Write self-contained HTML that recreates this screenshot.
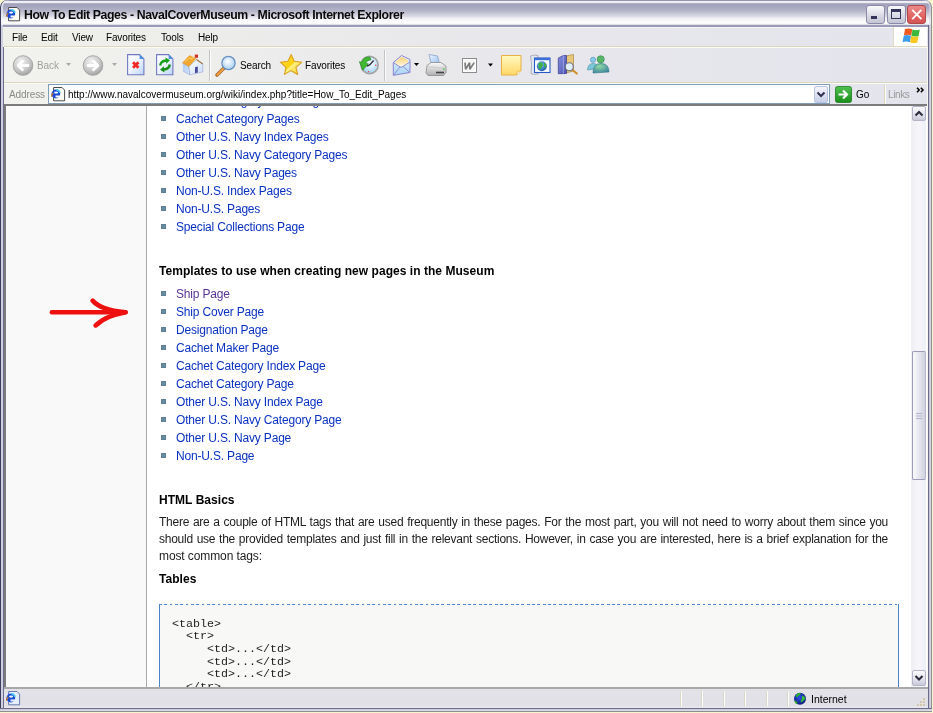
<!DOCTYPE html>
<html><head><meta charset="utf-8">
<style>
*{box-sizing:border-box}
html,body{margin:0;padding:0}
body{width:933px;height:713px;overflow:hidden;position:relative;background:#f8f5cf;font-family:"Liberation Sans",sans-serif}
.a{position:absolute}
#win{left:0;top:0;width:932px;height:712px;background:#f8f6ee;border-radius:7px 7px 0 0;overflow:hidden}
#title{left:0;top:0;width:932px;height:25px;border-radius:7px 7px 0 0;box-shadow:inset 1px 0 0 #3c3c5c,inset -1px 0 0 #8c9090,inset 3px 0 0 rgba(240,240,248,.7),inset -3px 0 0 rgba(220,220,232,.6);background:linear-gradient(to bottom,#9494b0 0px,#9494b0 1px,#f0f0f4 1px,#eeeef2 3px,#b8b8cc 3px,#a4a4be 4px,#a4a4be 6px,#acacc4 8.5px,#b4b4c8 10.5px,#c0c0d0 12.5px,#cecedc 14.5px,#dcdce6 16.5px,#e8e8ee 17.5px,#f0f0f4 18.5px,#f8f8fa 20.5px,#fcfcfc 22.5px,#f8f8fa 23.5px,#e0e0e8 24.5px)}
.tt{font-weight:bold;font-size:12.3px;line-height:1;letter-spacing:-0.4px;color:#0a0a0a;white-space:nowrap}
#frameL{left:0;top:25px;width:4px;height:687px;background:linear-gradient(to right,#3c3c5c 0,#3c3c5c 1px,#d0d0e0 1px,#d0d0e0 3px,#6c6c90 3px)}
#frameR{left:928px;top:25px;width:4px;height:687px;background:linear-gradient(to right,#6c6c88 0,#6c6c88 1px,#b4b4c8 1px,#d4d4e0 2px,#d4d4e0 3px,#8c9090 3px)}
#frameB{left:0;top:708px;width:932px;height:4px;background:linear-gradient(to bottom,#6c6c88 0,#6c6c88 1px,#c4c4d4 1px,#d8d8e4 2px,#d8d8e4 3px,#8c9090 3px)}
#menubar{left:3px;top:25px;width:925px;height:22px;background:linear-gradient(to bottom,#9a9ab6 0,#9a9ab6 2px,#f4f4f6 2px,#f4f4f6 3px,transparent 3px),linear-gradient(to right,#f0f0ea,#ebebeb 30%,#e6e6ec 65%,#e4e4ec)}
.mi{font-size:10px;color:#000;top:32px;white-space:nowrap;letter-spacing:-0.15px}
#sep1{left:4px;top:46px;width:923px;height:2px;background:linear-gradient(to bottom,#dcd6bc 0,#dcd6bc 1px,#fafaf6 1px)}
#toolbar{left:4px;top:48px;width:923px;height:35px;background:linear-gradient(to right,#f2f2ee,#ececec 30%,#e6e6ec 65%,#e4e4ec)}
#sep2{left:4px;top:82px;width:923px;height:2px;background:linear-gradient(to bottom,#dcd6bc 0,#dcd6bc 1px,#fafaf6 1px)}
#addr{left:4px;top:84px;width:923px;height:20px;background:linear-gradient(to right,#f2f2ee,#ececec 30%,#e6e6ec 65%,#e4e4ec)}
.tb{font-size:10px;white-space:nowrap;letter-spacing:-0.1px}
#content{left:4px;top:104px;width:923px;height:583px;background:#7c7c7c}
#page{left:6px;top:106px;width:921px;height:581px;background:#fff;overflow:hidden}
#leftcol{left:0;top:0;width:141px;height:581px;background:#f9f9f9;border-right:1px solid #aaa}
#status{left:4px;top:687px;width:924px;height:21px;background:linear-gradient(to bottom,#a8a8a8 0,#a8a8a8 2px,#e2e2e8 2px,#e0e0e6 19px,#e8e8ee 20px)}
.li{font-size:12px;letter-spacing:-0.18px;color:#0a32c0;white-space:nowrap}
.bul{width:5px;height:5px;background:#6a8ca2;border:1px solid #5d8096}
.h{font-size:12px;font-weight:bold;color:#000;white-space:nowrap;letter-spacing:0.04px}
.p{font-size:12px;color:#1c1c1c;white-space:nowrap;letter-spacing:-0.1px}
#pre{left:153px;top:498px;width:740px;height:100px;background:#f8f9f7;border:1px solid #4a84c6;border-top:none;border-bottom:none}
#pretop{left:153px;top:498px;width:740px;height:1px;background:repeating-linear-gradient(to right,#4e86c6 0,#4e86c6 2.8px,transparent 2.8px,transparent 5.33px)}
.pl{font-family:"Liberation Mono",monospace;font-size:11.67px;color:#1e1e1e;white-space:pre}
#sb{left:905px;top:0;width:15px;height:581px;background:linear-gradient(to right,#eeeef4,#f6f6fa 50%,#eeeef6)}
.li,.p,.h,.pl,.tb,.mi,.tt{will-change:transform}
</style></head><body>
<div id="win" class="a">
 <div id="title" class="a"></div>
 <div id="frameL" class="a"></div>
 <div id="frameR" class="a"></div>
 <div id="frameB" class="a"></div>
 <!-- title icon -->
 <svg class="a" style="left:5px;top:6px" width="16" height="16" viewBox="0 0 16 16">
  <path d="M3.6 1.5h8.4l2.6 2.6v10.7h-11z" fill="#fbfbf4" stroke="#4a4a4a" stroke-width="1"/>
  <circle cx="5.8" cy="8" r="4.4" fill="#1a4ad8"/>
  <path d="M6.3 3.7a4.3 4.3 0 0 1 3.8 3.2" fill="none" stroke="#48c8f8" stroke-width="1.6"/>
  <ellipse cx="6.1" cy="6.6" rx="2.1" ry="1.05" fill="#e8f4ff"/>
  <path d="M5.5 9.4h5v2.1h-5z" fill="#fbfbf4"/>
  <path d="M1.5 10.8q0.2-2.2 1.6-4" fill="none" stroke="#c87830" stroke-width="1.3"/>
 </svg>
 <div class="a tt" style="left:24px;top:8.6px">How To Edit Pages - NavalCoverMuseum - Microsoft Internet Explorer</div>
 <!-- title buttons -->
 <div class="a" style="left:866px;top:5px;width:19px;height:19px;border:1px solid #8a8aa8;border-radius:3px;background:linear-gradient(to bottom,#fafafc,#d8d8e4 60%,#c4c4d4)"></div>
 <div class="a" style="left:871px;top:16px;width:6px;height:3px;background:#34345a"></div>
 <div class="a" style="left:887px;top:5px;width:19px;height:19px;border:1px solid #8a8aa8;border-radius:3px;background:linear-gradient(to bottom,#fafafc,#d8d8e4 60%,#c4c4d4)"></div>
 <div class="a" style="left:891px;top:9px;width:10px;height:10px;border:1px solid #34345a;border-top-width:3px"></div>
 <div class="a" style="left:907px;top:5px;width:19px;height:19px;border:1px solid #b04848;border-radius:3px;background:linear-gradient(to bottom,#ec8a8a,#e06464 60%,#d45454)"></div>
 <svg class="a" style="left:907px;top:5px" width="19" height="19" viewBox="0 0 19 19"><path d="M5.2 4.8L14.4 14.2M14.4 4.8L5.2 14.2" stroke="#fff" stroke-width="1.8"/></svg>

 <!-- menubar -->
 <div id="menubar" class="a"></div>
 <div class="a" style="left:893px;top:27px;width:34px;height:19px;background:#fff"></div>
 <div class="a" style="left:893px;top:27px;width:1px;height:19px;background:#e0dcc4"></div>
 <svg class="a" style="left:896px;top:25px" width="30" height="22" viewBox="896 25 30 22">
  <path d="M905 29q3.5-1.3 7.3 0.2l-1.1 6.3q-3.8-1.4-7.3-0.1z" fill="#f05a20"/>
  <path d="M912.5 29.4q3.8 1.4 7.3 0.2l-1.2 6.3q-3.6 1.2-7.2-0.2z" fill="#3cb83c"/>
  <path d="M903.7 35.7q3.5-1.3 7.3 0.2l-1.1 6.3q-3.8-1.4-7.3-0.1z" fill="#3c9cf0"/>
  <path d="M911.2 36.1q3.8 1.4 7.3 0.2l-1.2 6.3q-3.6 1.2-7.2-0.2z" fill="#f8c820"/>
 </svg>
 <div class="a mi" style="left:12px">File</div>
 <div class="a mi" style="left:41px">Edit</div>
 <div class="a mi" style="left:72px">View</div>
 <div class="a mi" style="left:106px">Favorites</div>
 <div class="a mi" style="left:161px">Tools</div>
 <div class="a mi" style="left:198px">Help</div>
 <div id="sep1" class="a"></div>

 <!-- toolbar -->
 <div id="toolbar" class="a"></div>
 <div id="sep2" class="a"></div>
 <div id="addr" class="a"></div>

 <!-- toolbar icons -->
 <svg class="a" style="left:12px;top:55px" width="22" height="22" viewBox="0 0 22 22">
  <defs><radialGradient id="gb" cx="40%" cy="30%" r="75%"><stop offset="0" stop-color="#f2f2f2"/><stop offset="0.6" stop-color="#c8c8c8"/><stop offset="1" stop-color="#9c9c9c"/></radialGradient></defs>
  <circle cx="11" cy="10.5" r="9.8" fill="url(#gb)" stroke="#a2a2a2" stroke-width="0.9"/>
  <path d="M16 10.5H6.5M10.5 6.2L6.2 10.5 10.5 14.8" fill="none" stroke="#fff" stroke-width="2.8" stroke-linecap="round" stroke-linejoin="round"/>
 </svg>
 <div class="a tb" style="left:36.5px;top:61.1px;color:#a0a0a0;line-height:1">Back</div>
 <svg class="a" style="left:66px;top:63px" width="6" height="4"><path d="M0 0h5L2.5 3z" fill="#a8a8a8"/></svg>
 <svg class="a" style="left:82px;top:55px" width="22" height="22" viewBox="0 0 22 22">
  <circle cx="11" cy="10.5" r="9.8" fill="url(#gb)" stroke="#a2a2a2" stroke-width="0.9"/>
  <path d="M6 10.5H15.5M11.5 6.2L15.8 10.5 11.5 14.8" fill="none" stroke="#fff" stroke-width="2.8" stroke-linecap="round" stroke-linejoin="round"/>
 </svg>
 <svg class="a" style="left:112px;top:63px" width="6" height="4"><path d="M0 0h5L2.5 3z" fill="#a8a8a8"/></svg>
 <!-- stop -->
 <svg class="a" style="left:124px;top:50px" width="54" height="30" viewBox="124 50 54 30">
  <defs><linearGradient id="gdoc" x1="0" y1="0" x2="1" y2="1"><stop offset="0" stop-color="#ffffff"/><stop offset="0.5" stop-color="#eef4fe"/><stop offset="1" stop-color="#b8d4f8"/></linearGradient></defs>
  <path d="M127.6 54.6h12l4.3 4.3v15.9h-16.3z" fill="url(#gdoc)" stroke="#7078c0" stroke-width="1.1"/>
  <path d="M139.6 54.6v4.3h4.3z" fill="#4890e0"/>
  <path d="M133 62.2l5.5 5.6M138.5 62.2l-5.5 5.6" stroke="#f02828" stroke-width="2.8"/>
  <path d="M156.6 54.6h12l4.3 4.3v15.9h-16.3z" fill="url(#gdoc)" stroke="#7078c0" stroke-width="1.1"/>
  <path d="M168.6 54.6v4.3h4.3z" fill="#4890e0"/>
  <path d="M160.2 65.5q0.5-4.5 6-5" fill="none" stroke="#18a018" stroke-width="2.4"/>
  <path d="M165.5 57.5l4.5 2.8-3.8 3.5z" fill="#18a018"/>
  <path d="M169.8 64.5q-0.5 4.5-6 5" fill="none" stroke="#189018" stroke-width="2.4"/>
  <path d="M164.5 72.5l-4.5-2.8 3.8-3.5z" fill="#189018"/>
 </svg>
 <!-- home -->
 <svg class="a" style="left:178px;top:50px" width="30" height="30" viewBox="178 50 30 30">
  <defs><linearGradient id="gwall" x1="0" y1="0" x2="1" y2="1"><stop offset="0" stop-color="#a8c8f4"/><stop offset="1" stop-color="#d8e8fc"/></linearGradient>
  <linearGradient id="gfront" x1="0" y1="0" x2="1" y2="1"><stop offset="0" stop-color="#ffffff"/><stop offset="1" stop-color="#c8dcf8"/></linearGradient></defs>
  <path d="M182.8 62.6L188.9 66.4 189.8 74.8 183 71" fill="url(#gwall)" stroke="#8aa0d0" stroke-width="0.6"/>
  <path d="M188.9 66.4L196.5 59.6 202.8 63.9 202.8 71.9 189.8 74.8z" fill="url(#gfront)" stroke="#98a8d0" stroke-width="0.6"/>
  <path d="M196.5 59.6L202.8 63.9" stroke="#a07850" stroke-width="1.2"/>
  <path d="M182.6 62.8L189.4 55.6 195.9 58.4 188.9 66.6z" fill="#f2a830" stroke="#e09020" stroke-width="0.5"/>
  <path d="M185 61.5l4.5-3.5 1.5 1 3-2" fill="none" stroke="#ffd870" stroke-width="0.9"/>
  <rect x="194.8" y="54.6" width="3.2" height="3.2" fill="#d03018"/>
  <path d="M195 67.2l2.8-0.6v6l-2.8 0.6z" fill="#4a4a98"/>
 </svg>
 <!-- separator -->
 <div class="a" style="left:209px;top:50px;width:1px;height:31px;background:#c4c4c8"></div>
 <div class="a" style="left:210px;top:50px;width:1px;height:31px;background:#fcfcfc"></div>
 <!-- search -->
 <svg class="a" style="left:215px;top:55px" width="22" height="22" viewBox="0 0 22 22">
  <defs><radialGradient id="glens" cx="45%" cy="40%" r="60%"><stop offset="0" stop-color="#ffffff"/><stop offset="1" stop-color="#a8d0f0"/></radialGradient></defs>
  <path d="M2 20l7-7" stroke="#a06020" stroke-width="3.4" stroke-linecap="round"/>
  <path d="M2.3 19.7l6.5-6.5" stroke="#f0a040" stroke-width="2" stroke-linecap="round"/>
  <circle cx="13.5" cy="8" r="6.6" fill="url(#glens)" stroke="#6890c0" stroke-width="1.3"/>
 </svg>
 <div class="a tb" style="left:240.3px;top:61.1px;color:#000;line-height:1">Search</div>
 <!-- star -->
 <svg class="a" style="left:274px;top:50px" width="30" height="30" viewBox="274 50 30 30">
  <defs><linearGradient id="gstar" x1="0" y1="0" x2="1" y2="1"><stop offset="0" stop-color="#ffe040"/><stop offset="0.5" stop-color="#ffd010"/><stop offset="0.55" stop-color="#fff080"/><stop offset="1" stop-color="#f8c818"/></linearGradient></defs>
  <path d="M291.2 54.6L294.2 61.3 301.8 62.4 296 67.2 297.6 74.4 290.8 70.6 284.5 74.4 286 67.3 280.3 62.2 288 61.2z" fill="url(#gstar)" stroke="#d8a020" stroke-width="1.1" stroke-linejoin="round"/>
 </svg>
 <div class="a tb" style="left:304.7px;top:61.1px;color:#000;line-height:1">Favorites</div>
 <!-- history -->
 <svg class="a" style="left:352px;top:50px" width="70" height="30" viewBox="352 50 70 30">
  <defs><radialGradient id="gclock" cx="55%" cy="40%" r="65%"><stop offset="0" stop-color="#ffffff"/><stop offset="1" stop-color="#98ccf0"/></radialGradient>
  <linearGradient id="genv" x1="0" y1="0" x2="0" y2="1"><stop offset="0" stop-color="#e8f4fc"/><stop offset="1" stop-color="#a8d4f4"/></linearGradient>
  <linearGradient id="gletter" x1="0" y1="0" x2="0" y2="1"><stop offset="0" stop-color="#f8d070"/><stop offset="1" stop-color="#fff8e8"/></linearGradient></defs>
  <circle cx="369.6" cy="65" r="8.6" fill="url(#gclock)" stroke="#a4a4a4" stroke-width="1.6"/>
  <path d="M369.6 65l4-4.5M369.6 65l-3 1" stroke="#303040" stroke-width="1.4"/>
  <circle cx="375.8" cy="65.2" r="0.7" fill="#e03030"/><circle cx="368.6" cy="71.6" r="0.7" fill="#e03030"/>
  <path d="M370 57.2q-6-1-8.5 5l-2.2-0.5 3.5 8.5 5.5-6.5-2.8-0.3q1.5-3.5 5.5-3.5z" fill="#40b830" stroke="#208820" stroke-width="0.6"/>
  <!-- mail -->
  <path d="M393.3 62.5L401.5 55.5 410 59.5 410 72.5 393.3 75.3z" fill="url(#genv)" stroke="#8c84d0" stroke-width="1"/>
  <path d="M395.5 61.5l6-4.5 6.5 3v3.5l-6 3-6.5-2z" fill="url(#gletter)"/>
  <path d="M393.3 62.5L401 67.5 410 62M393.3 75.3L400 67M410 72.5L403 66.5" fill="none" stroke="#8c84d0" stroke-width="0.9"/>
  <path d="M414 63h5l-2.5 3z" fill="#000"/>
 </svg>
 <div class="a" style="left:384px;top:50px;width:1px;height:31px;background:#c4c4c8"></div>
 <div class="a" style="left:385px;top:50px;width:1px;height:31px;background:#fcfcfc"></div>
 <!-- print -->
 <svg class="a" style="left:422px;top:50px" width="100" height="30" viewBox="422 50 100 30">
  <defs><linearGradient id="gprn" x1="0" y1="0" x2="0" y2="1"><stop offset="0" stop-color="#fafafa"/><stop offset="1" stop-color="#b0b0b0"/></linearGradient>
  <linearGradient id="gpap" x1="0" y1="0" x2="1" y2="1"><stop offset="0" stop-color="#f0f8ff"/><stop offset="1" stop-color="#98c0f0"/></linearGradient>
  <linearGradient id="gnote" x1="0" y1="0" x2="0" y2="1"><stop offset="0" stop-color="#fff8c0"/><stop offset="1" stop-color="#ffd868"/></linearGradient></defs>
  <path d="M429 54.5l8.5 1.5 2 7.5-8.5-0.5z" fill="url(#gpap)" stroke="#8aa0c8" stroke-width="0.8"/>
  <path d="M427 65.5l4-3h10l5 3.5v6.5l-2.5 3h-15.5l-2-2.5z" fill="url(#gprn)" stroke="#8a8a8a" stroke-width="0.8"/>
  <path d="M427 66.5l14 1.5 5-1.5" fill="none" stroke="#c8c8c8" stroke-width="0.8"/>
  <path d="M436 72.5h8" stroke="#404048" stroke-width="1.6"/>
  <rect x="443" y="68.5" width="1.6" height="1.2" fill="#30c030"/>
  <!-- word -->
  <rect x="462.5" y="58.5" width="14" height="14" fill="#f6f6f6" stroke="#8c8c8c" stroke-width="1"/>
  <rect x="463.5" y="59.5" width="12" height="12" fill="none" stroke="#fff" stroke-width="0.8"/>
  <path d="M465 62.6L465.6 69.2 469.6 62.8 469.8 69.2 474.2 62.6" fill="none" stroke="#7c7c7c" stroke-width="1.7" stroke-linejoin="bevel"/>
  <path d="M488 63.5h5l-2.5 3z" fill="#000"/>
  <!-- note -->
  <path d="M501.5 55.5h19.5v15l-4.5 4.5h-15z" fill="url(#gnote)" stroke="#e8b040" stroke-width="1"/>
  <path d="M516.5 75l0.8-3.5 3.7-0.8" fill="#fff4c8" stroke="#e8b040" stroke-width="0.8"/>
 </svg>
 <!-- msn window/globe -->
 <svg class="a" style="left:524px;top:50px" width="90" height="30" viewBox="524 50 90 30">
  <defs><radialGradient id="gglb" cx="40%" cy="35%" r="70%"><stop offset="0" stop-color="#80c8f8"/><stop offset="1" stop-color="#1850b0"/></radialGradient>
  <linearGradient id="gbook" x1="0" y1="0" x2="1" y2="1"><stop offset="0" stop-color="#8890e0"/><stop offset="1" stop-color="#4850b0"/></linearGradient>
  <radialGradient id="gppl" cx="40%" cy="30%" r="80%"><stop offset="0" stop-color="#90d8a0"/><stop offset="1" stop-color="#3880a0"/></radialGradient></defs>
  <path d="M530.5 56q4-1.5 7.5-0.5v18.5q-3.5 0.8-7-0.2q1.5-9 -0.5-17.8z" fill="#e4e8f0" stroke="#9ca0b0" stroke-width="0.8"/>
  <rect x="534.5" y="58" width="15.5" height="14.5" fill="#fafcff" stroke="#2858c8" stroke-width="1.1"/>
  <rect x="534.5" y="58" width="15.5" height="2.2" fill="#3a70d8"/>
  <circle cx="541.8" cy="66.3" r="5" fill="url(#gglb)"/>
  <path d="M538.5 63.5q2-2 3.5-0.5t0.5 3-1.5 3-2.5-1.5zM543.5 62.5q2.5 0.5 3 2.5t-1.5 3q-1-2-1.5-5.5z" fill="#40b040"/>
  <!-- books -->
  <path d="M566 56l7.5-1.5v16.5l-7.5 2z" fill="#e8c878" stroke="#b08840" stroke-width="0.7"/>
  <path d="M558.3 58l5-2.5h3.2v18l-8.2 0.2z" fill="url(#gbook)" stroke="#383890" stroke-width="0.7"/>
  <path d="M563.3 55.5v18" stroke="#b0b8f0" stroke-width="0.7"/>
  <path d="M572 69.5l4.8 4" stroke="#d09030" stroke-width="2.2" stroke-linecap="round"/>
  <circle cx="569.3" cy="66.8" r="4" fill="#dff0fc" stroke="#707088" stroke-width="1.1"/>
  <!-- messenger -->
  <path d="M587.5 70q0.5-6.5 5.5-6.5t5.5 5z" fill="#7cc8d8" stroke="#4890a8" stroke-width="0.6"/>
  <circle cx="593" cy="59.8" r="2.6" fill="#88c8e8" stroke="#4890b8" stroke-width="0.6"/>
  <path d="M593 73q0-9.5 8-9.5t8 8.5z" fill="url(#gppl)" stroke="#307888" stroke-width="0.6"/>
  <circle cx="600.7" cy="59.3" r="3.6" fill="#58b868" stroke="#308048" stroke-width="0.6"/>
 </svg>
 <!-- address bar -->
 <div class="a tb" style="left:9px;top:89.8px;color:#8a8a8a;line-height:1">Address</div>
 <div class="a" style="left:48px;top:84px;width:782px;height:20px;border:1px solid #7f9db9;background:#fff"></div>
 <svg class="a" style="left:50px;top:86px" width="16" height="16" viewBox="0 0 16 16">
  <path d="M3.6 1.5h8.4l2.6 2.6v10.7h-11z" fill="#fbfbf4" stroke="#4a4a4a" stroke-width="1"/>
  <circle cx="5.8" cy="8" r="4.4" fill="#1a4ad8"/>
  <path d="M6.3 3.7a4.3 4.3 0 0 1 3.8 3.2" fill="none" stroke="#48c8f8" stroke-width="1.6"/>
  <ellipse cx="6.1" cy="6.6" rx="2.1" ry="1.05" fill="#e8f4ff"/>
  <path d="M5.5 9.4h5v2.1h-5z" fill="#fbfbf4"/>
  <path d="M1.5 10.8q0.2-2.2 1.6-4" fill="none" stroke="#c87830" stroke-width="1.3"/>
 </svg>
 <div class="a tb" style="left:68.3px;top:89.5px;color:#000;line-height:1;letter-spacing:0;transform:scaleY(1.1);transform-origin:0 85%">http://www.navalcovermuseum.org/wiki/index.php?title=How_To_Edit_Pages</div>
 <div class="a" style="left:814px;top:86px;width:14px;height:17px;border:1px solid #b8c4e0;border-radius:2px;background:linear-gradient(to bottom,#f4f4fa,#c8d0e8)"></div>
 <svg class="a" style="left:816px;top:91px" width="10" height="7"><path d="M1.5 1.5l3.5 3.5 3.5-3.5" fill="none" stroke="#303050" stroke-width="2"/></svg>
 <svg class="a" style="left:835px;top:86px" width="17" height="17" viewBox="0 0 17 17">
  <defs><linearGradient id="ggo" x1="0" y1="0" x2="0" y2="1"><stop offset="0" stop-color="#50c050"/><stop offset="1" stop-color="#189018"/></linearGradient></defs>
  <rect x="0.5" y="0.5" width="16" height="16" rx="2" fill="url(#ggo)" stroke="#207820" stroke-width="0.8"/>
  <path d="M3.5 8.5h8M8 4.5l4 4-4 4" fill="none" stroke="#fff" stroke-width="2.2"/>
 </svg>
 <div class="a tb" style="left:855.6px;top:89.9px;color:#000;line-height:1">Go</div>
 <div class="a" style="left:884px;top:85px;width:1px;height:19px;background:#dcd6bc"></div>
 <div class="a" style="left:885px;top:85px;width:1px;height:19px;background:#fafaf6"></div>
 <div class="a tb" style="left:887.7px;top:89.9px;color:#9a9a9a;line-height:1;letter-spacing:-0.4px">Links</div>
 <svg class="a" style="left:916px;top:87px" width="9" height="6" viewBox="0 0 9 6"><path d="M1 0.8l2.2 2.2L1 5.2M4.8 0.8l2.2 2.2-2.2 2.2" fill="none" stroke="#000" stroke-width="1.5"/></svg>

 <!-- content -->
 <div id="content" class="a"></div>
 <div id="page" class="a">
  <div id="leftcol" class="a"></div>
  <div class="a bul" style="left:155px;top:-8.4px"></div>
  <div class="a li" style="left:170px;top:-12.1px">Cachet Category Index Pages</div>
  <div class="a bul" style="left:155px;top:9.6px"></div>
  <div class="a li" style="left:170px;top:5.9px">Cachet Category Pages</div>
  <div class="a bul" style="left:155px;top:27.6px"></div>
  <div class="a li" style="left:170px;top:23.9px">Other U.S. Navy Index Pages</div>
  <div class="a bul" style="left:155px;top:45.6px"></div>
  <div class="a li" style="left:170px;top:41.9px">Other U.S. Navy Category Pages</div>
  <div class="a bul" style="left:155px;top:63.6px"></div>
  <div class="a li" style="left:170px;top:59.9px">Other U.S. Navy Pages</div>
  <div class="a bul" style="left:155px;top:81.6px"></div>
  <div class="a li" style="left:170px;top:77.9px">Non-U.S. Index Pages</div>
  <div class="a bul" style="left:155px;top:99.6px"></div>
  <div class="a li" style="left:170px;top:95.9px">Non-U.S. Pages</div>
  <div class="a bul" style="left:155px;top:117.6px"></div>
  <div class="a li" style="left:170px;top:113.9px">Special Collections Page</div>
  <div class="a bul" style="left:155px;top:185.2px"></div>
  <div class="a li" style="left:170px;top:181.3px;color:#5a3696">Ship Page</div>
  <div class="a bul" style="left:155px;top:203.2px"></div>
  <div class="a li" style="left:170px;top:199.3px">Ship Cover Page</div>
  <div class="a bul" style="left:155px;top:221.2px"></div>
  <div class="a li" style="left:170px;top:217.3px">Designation Page</div>
  <div class="a bul" style="left:155px;top:239.2px"></div>
  <div class="a li" style="left:170px;top:235.3px">Cachet Maker Page</div>
  <div class="a bul" style="left:155px;top:257.2px"></div>
  <div class="a li" style="left:170px;top:253.3px">Cachet Category Index Page</div>
  <div class="a bul" style="left:155px;top:275.2px"></div>
  <div class="a li" style="left:170px;top:271.3px">Cachet Category Page</div>
  <div class="a bul" style="left:155px;top:293.2px"></div>
  <div class="a li" style="left:170px;top:289.3px">Other U.S. Navy Index Page</div>
  <div class="a bul" style="left:155px;top:311.2px"></div>
  <div class="a li" style="left:170px;top:307.3px">Other U.S. Navy Category Page</div>
  <div class="a bul" style="left:155px;top:329.2px"></div>
  <div class="a li" style="left:170px;top:325.3px">Other U.S. Navy Page</div>
  <div class="a bul" style="left:155px;top:347.2px"></div>
  <div class="a li" style="left:170px;top:343.3px">Non-U.S. Page</div>
  <div class="a h" style="left:153px;top:158.4px">Templates to use when creating new pages in the Museum</div>
  <div class="a h" style="left:153px;top:386.8px">HTML Basics</div>
  <div class="a h" style="left:153px;top:465.6px">Tables</div>
  <div class="a p" style="left:153px;top:409.0px;width:729px;text-align:justify;text-align-last:justify;letter-spacing:-0.25px">There are a couple of HTML tags that are used frequently in these pages. For the most part, you will not need to worry about them since you</div>
  <div class="a p" style="left:153px;top:425.8px;width:729px;text-align:justify;text-align-last:justify;letter-spacing:-0.25px">should use the provided templates and just fill in the relevant sections. However, in case you are interested, here is a brief explanation for the</div>
  <div class="a p" style="left:153px;top:442.6px">most common tags:</div>
  <div id="pre" class="a"></div>
  <div id="pretop" class="a"></div>
  <div class="a pl" style="left:166.2px;top:512.6px;line-height:1">&lt;table&gt;</div>
  <div class="a pl" style="left:166.2px;top:525.3px;line-height:1">  &lt;tr&gt;</div>
  <div class="a pl" style="left:166.2px;top:537.9px;line-height:1">     &lt;td&gt;...&lt;/td&gt;</div>
  <div class="a pl" style="left:166.2px;top:550.5px;line-height:1">     &lt;td&gt;...&lt;/td&gt;</div>
  <div class="a pl" style="left:166.2px;top:563.1px;line-height:1">     &lt;td&gt;...&lt;/td&gt;</div>
  <div class="a pl" style="left:166.2px;top:575.7px;line-height:1">  &lt;/tr&gt;</div>
  <div id="sb" class="a"></div>
  <!-- scrollbar parts (page-relative) -->
  <div class="a" style="left:906px;top:0px;width:14px;height:15px;border:1px solid #b4b4c8;border-radius:2px;background:linear-gradient(to bottom,#fbfbfd,#dcdce8 70%,#c8c8d8)"></div>
  <svg class="a" style="left:906px;top:0px" width="14" height="15"><path d="M3.5 9.5l3.5-3.5 3.5 3.5" fill="none" stroke="#2a2a3a" stroke-width="2"/></svg>
  <div class="a" style="left:906px;top:564px;width:14px;height:16px;border:1px solid #b4b4c8;border-radius:2px;background:linear-gradient(to bottom,#fbfbfd,#dcdce8 70%,#c8c8d8)"></div>
  <svg class="a" style="left:906px;top:564px" width="14" height="16"><path d="M3.5 6l3.5 3.5 3.5-3.5" fill="none" stroke="#2a2a3a" stroke-width="2"/></svg>
  <div class="a" style="left:906px;top:245px;width:14px;height:129px;border:1px solid #9c9cb8;border-right-color:#b8b8cc;border-radius:2px;background:linear-gradient(to right,#fafafd,#e8e8f0 45%,#d0d0e0)"></div>
  <div class="a" style="left:910px;top:307px;width:6px;height:1px;background:#b4b4c8;box-shadow:0 2.5px 0 #b4b4c8,0 5px 0 #b4b4c8"></div>

 </div>

 <div id="status" class="a"></div>

 <div class="a" style="left:681px;top:691px;width:1px;height:15px;background:#fdfdfa;box-shadow:-1px 0 0 #dcd8c8"></div>
 <div class="a" style="left:702px;top:691px;width:1px;height:15px;background:#fdfdfa;box-shadow:-1px 0 0 #dcd8c8"></div>
 <div class="a" style="left:724px;top:691px;width:1px;height:15px;background:#fdfdfa;box-shadow:-1px 0 0 #dcd8c8"></div>
 <div class="a" style="left:745px;top:691px;width:1px;height:15px;background:#fdfdfa;box-shadow:-1px 0 0 #dcd8c8"></div>
 <div class="a" style="left:767px;top:691px;width:1px;height:15px;background:#fdfdfa;box-shadow:-1px 0 0 #dcd8c8"></div>
 <div class="a" style="left:788px;top:691px;width:1px;height:15px;background:#fdfdfa;box-shadow:-1px 0 0 #dcd8c8"></div>
 <svg class="a" style="left:793px;top:692px" width="14" height="14" viewBox="0 0 14 14">
  <defs><radialGradient id="gglobe" cx="45%" cy="40%" r="65%"><stop offset="0" stop-color="#3050e8"/><stop offset="1" stop-color="#081870"/></radialGradient></defs>
  <circle cx="7" cy="6.8" r="6" fill="url(#gglobe)"/>
  <path d="M2.5 4q1.5-3 5-3.2 1 1.3-1 2.5-2 0.8-2.5 2.3z" fill="#30b030"/>
  <path d="M9 3.5q2.5 0.5 3.5 3-2 2.5-4.5 4-0.8-1 0.3-2.3 1.3-1.2 0.7-4.7z" fill="#38c038"/>
  <path d="M1.3 8.5q1.8 0 3 1.6 0.5 1.5-0.5 2.2-2-1-2.5-3.8z" fill="#30a830"/>
 </svg>
 <div class="a tb" style="left:810.5px;top:694.3px;color:#000;line-height:1;font-size:10.5px;letter-spacing:0">Internet</div>
 <svg class="a" style="left:5px;top:690px" width="16" height="16" viewBox="0 0 16 16">
  <path d="M3.6 1.5h8.4l2.6 2.6v10.7h-11z" fill="#e4eefc" stroke="#6a7ab0" stroke-width="1"/>
  <circle cx="5.8" cy="8" r="4.4" fill="#1a4ad8"/>
  <path d="M6.3 3.7a4.3 4.3 0 0 1 3.8 3.2" fill="none" stroke="#48c8f8" stroke-width="1.6"/>
  <ellipse cx="6.1" cy="6.6" rx="2.1" ry="1.05" fill="#e8f4ff"/>
  <path d="M5.5 9.4h5v2.1h-5z" fill="#e4eefc"/>
  <path d="M1.5 10.8q0.2-2.2 1.6-4" fill="none" stroke="#c87830" stroke-width="1.3"/>
 </svg>
 <svg class="a" style="left:916px;top:697px" width="11" height="10"><g fill="#d4c8ac"><rect x="7" y="1" width="2" height="2"/><rect x="4" y="4" width="2" height="2"/><rect x="7" y="4" width="2" height="2"/><rect x="1" y="7" width="2" height="2"/><rect x="4" y="7" width="2" height="2"/><rect x="7" y="7" width="2" height="2"/></g></svg>

 <svg class="a" style="left:40px;top:290px" width="100" height="45" viewBox="40 290 100 45">
  <path d="M51.8 312.3H123" stroke="#ee1010" stroke-width="4.4" stroke-linecap="round"/>
  <path d="M92.6 300.6q4 4.5 12 7.5t21 4.2" fill="none" stroke="#ee1010" stroke-width="4.6" stroke-linecap="round"/>
  <path d="M95.6 325.4q7-6 13.5-8.5t16.5-4.6" fill="none" stroke="#ee1010" stroke-width="4.6" stroke-linecap="round"/>
  <path d="M112 309.5l13.5 2.8-13.5 4z" fill="#ee1010"/>
 </svg>
</div>
</body></html>
